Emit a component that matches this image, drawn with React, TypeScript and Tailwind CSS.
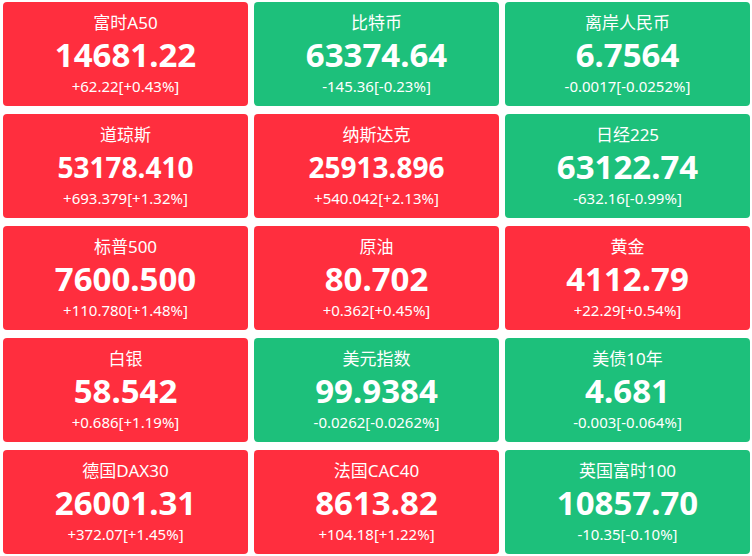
const quotes = [
  { name: "富时A50", price: "14681.22", change: "+62.22[+0.43%]", up: true },
  { name: "比特币", price: "63374.64", change: "-145.36[-0.23%]", up: false },
  { name: "离岸人民币", price: "6.7564", change: "-0.0017[-0.0252%]", up: false },
  { name: "道琼斯", price: "53178.410", change: "+693.379[+1.32%]", up: true },
  { name: "纳斯达克", price: "25913.896", change: "+540.042[+2.13%]", up: true },
  { name: "日经225", price: "63122.74", change: "-632.16[-0.99%]", up: false },
  { name: "标普500", price: "7600.500", change: "+110.780[+1.48%]", up: true },
  { name: "原油", price: "80.702", change: "+0.362[+0.45%]", up: true },
  { name: "黄金", price: "4112.79", change: "+22.29[+0.54%]", up: true },
  { name: "白银", price: "58.542", change: "+0.686[+1.19%]", up: true },
  { name: "美元指数", price: "99.9384", change: "-0.0262[-0.0262%]", up: false },
  { name: "美债10年", price: "4.681", change: "-0.003[-0.064%]", up: false },
  { name: "德国DAX30", price: "26001.31", change: "+372.07[+1.45%]", up: true },
  { name: "法国CAC40", price: "8613.82", change: "+104.18[+1.22%]", up: true },
  { name: "英国富时100", price: "10857.70", change: "-10.35[-0.10%]", up: false },
]

export default function App() {
  return (
    <div
      className="w-[752px] h-[556px] bg-white pt-[2px] pl-[3px] pr-[2px]"
      style={{ fontFamily: '"Noto Sans", "Noto Sans CJK SC", sans-serif' }}
    >
      <div className="grid grid-cols-[245px_245px_245px] gap-x-[6px] gap-y-[8px]">
        {quotes.map((q) => (
          <div
            key={q.name}
            className={`h-[104px] rounded-[4px] pt-[10px] flex flex-col items-center text-white ${
              q.up ? "bg-[#ff2e3e]" : "bg-[#1dc07b]"
            }`}
          >
            <div className="text-[17px] leading-[22px]">{q.name}</div>
            {/* long prices get a smaller size so they fit */}
            <div
              className={`leading-[42px] font-bold ${
                q.price.length > 8 ? "text-[28px]" : "text-[33px]"
              }`}
            >
              {q.price}
            </div>
            <div className="text-[15px] leading-[20px]">{q.change}</div>
          </div>
        ))}
      </div>
    </div>
  )
}
